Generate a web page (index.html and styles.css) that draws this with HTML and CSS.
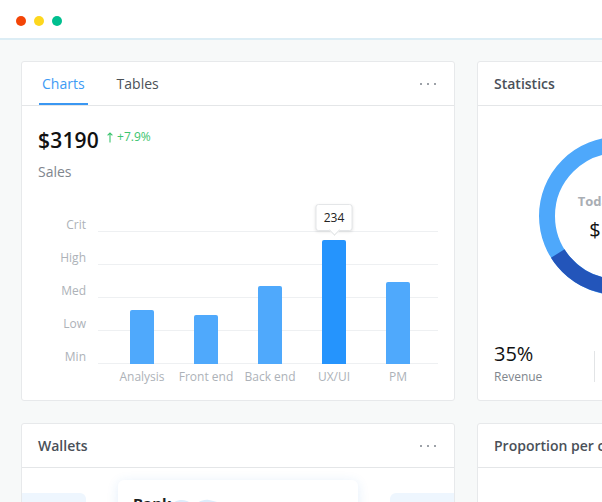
FILE: index.html
```html
<!DOCTYPE html>
<html lang="en">
<head>
<meta charset="utf-8">
<title>Dashboard</title>
<link rel="stylesheet" href="styles.css">
</head>
<body>
<div class="titlebar">
  <span class="dot dot-red"></span>
  <span class="dot dot-yellow"></span>
  <span class="dot dot-green"></span>
</div>
<main class="dashboard">
  <section class="card card-sales">
    <header class="card-head">
      <nav class="tabs">
        <span class="tab tab-active">Charts</span>
        <span class="tab">Tables</span>
      </nav>
      <span class="more"><i></i><i></i><i></i></span>
    </header>
    <div class="sales-body">
      <div class="total">
        <span class="amount">$3190</span>
        <span class="growth">
          <svg class="arrow" width="6" height="11" viewBox="0 0 6 11"><path d="M3 10.5V1M0.6 3.4L3 1l2.4 2.4" fill="none" stroke="#3cc46e" stroke-width="1.1"/></svg>
          +7.9%
        </span>
      </div>
      <div class="sub">Sales</div>
      <div class="chart">
        <div class="y-axis">
          <span>Crit</span><span>High</span><span>Med</span><span>Low</span><span>Min</span>
        </div>
        <div class="plot-wrap">
          <div class="plot">
            <div class="grid-lines"><i></i><i></i><i></i><i></i></div>
            <div class="bars">
              <div class="bar-col"><div class="bar" style="height:54px"></div></div>
              <div class="bar-col"><div class="bar" style="height:49px"></div></div>
              <div class="bar-col"><div class="bar" style="height:78px"></div></div>
              <div class="bar-col"><div class="bar bar-hl" style="height:124px"><span class="tip">234</span></div></div>
              <div class="bar-col"><div class="bar" style="height:82px"></div></div>
            </div>
          </div>
          <div class="x-axis">
            <span>Analysis</span><span>Front end</span><span>Back end</span><span>UX/UI</span><span>PM</span>
          </div>
        </div>
      </div>
    </div>
  </section>

  <section class="card card-stats">
    <header class="card-head">
      <h2 class="card-title">Statistics</h2>
    </header>
    <div class="stats-body">
      <div class="donut">
        <svg width="158" height="158" viewBox="0 0 158 158">
          <circle cx="79" cy="79" r="71" fill="none" stroke="#4ea8fb" stroke-width="16"/>
          <circle cx="79" cy="79" r="71" fill="none" stroke="#2355ba" stroke-width="16" stroke-dasharray="121.4 446.1" transform="rotate(50 79 79)"/>
        </svg>
        <div class="donut-text">
          <span class="donut-label">Today's Sales</span>
          <span class="donut-value">$1,250</span>
        </div>
      </div>
      <div class="stat-row">
        <div class="stat">
          <span class="stat-value">35%</span>
          <span class="stat-label">Revenue</span>
        </div>
        <span class="stat-sep"></span>
        <div class="stat stat-next">
          <span class="stat-value">45%</span>
          <span class="stat-label">Profit</span>
        </div>
      </div>
    </div>
  </section>

  <section class="card card-wallets">
    <header class="card-head">
      <h2 class="card-title">Wallets</h2>
      <span class="more"><i></i><i></i><i></i></span>
    </header>
    <div class="carousel">
      <div class="wallet wallet-side"></div>
      <div class="wallet wallet-main">
        <svg class="map" width="56" height="30" viewBox="0 0 56 30">
          <path d="M2 8c4-4 10-5 15-3 3 1 4 4 8 3 4-2 8-5 14-4 5 1 9 3 13 2 2 0 3 2 1 4-3 2-7 1-9 4-2 2 0 5-3 6-3 1-5-2-8-1-3 1-2 5-6 6-3 0-4-3-7-3-3 0-5 3-8 1-2-2 1-5-2-7C7 14 0 11 2 8z" fill="#dcecfb"/>
        </svg>
        <span class="wallet-name">Bank</span>
      </div>
      <div class="wallet wallet-side"></div>
    </div>
  </section>

  <section class="card card-prop">
    <header class="card-head">
      <h2 class="card-title">Proportion per category</h2>
    </header>
  </section>
</main>
</body>
</html>
```

FILE: styles.css
```css
* { box-sizing: border-box; }
html, body { margin: 0; padding: 0; }
body {
  width: 602px;
  height: 502px;
  overflow: hidden;
  background: #f7f9f9;
  font-family: "Open Sans", "Liberation Sans", sans-serif;
  color: #222;
}
.titlebar {
  height: 40px;
  background: #fff;
  border-bottom: 2px solid #dcedf5;
  display: flex;
  align-items: center;
  gap: 8px;
  padding: 3px 0 0 16px;
}
.dot { width: 10px; height: 10px; border-radius: 50%; display: block; }
.dot-red { background: #f34507; }
.dot-yellow { background: #fdd71e; }
.dot-green { background: #00bf8f; }

.dashboard {
  display: grid;
  grid-template-columns: 434px 282px;
  grid-template-rows: 340px 300px;
  column-gap: 22px;
  row-gap: 22px;
  padding: 21px 0 0 21px;
  width: max-content;
}
.card {
  background: #fff;
  border: 1px solid #e7e9eb;
  border-radius: 3px;
  overflow: hidden;
}
.card-head {
  height: 44px;
  border-bottom: 1px solid #e4e6e8;
  display: flex;
  align-items: center;
  justify-content: space-between;
  padding: 0 18px 0 16px;
}
.card-title {
  margin: 0;
  font-size: 14px;
  font-weight: 600;
  color: #4a5058;
  line-height: 20px;
}
.tabs { display: flex; gap: 26px; height: 100%; margin-left: 1px; }
.tab {
  display: flex;
  align-items: center;
  padding: 0 3px;
  font-size: 14px;
  color: #4b5157;
  height: 100%;
}
.tab-active { color: #3d9bf5; box-shadow: inset 0 -2px 0 #3a97f2; }
.more { display: flex; gap: 5px; }
.more i { display: block; width: 2px; height: 2px; background: #9da2a8; }

.sales-body { padding: 20px 16px 0 16px; }
.total { display: flex; }
.amount { font-size: 21px; font-weight: 600; line-height: 28px; color: #111; letter-spacing: 0.2px; }
.growth {
  align-self: flex-start;
  margin: 3px 0 0 8px;
  display: flex;
  align-items: center;
  gap: 4px;
  font-size: 12px;
  line-height: 16px;
  color: #3cc46e;
}
.arrow { display: block; margin-top: 1px; }
.sub { margin-top: 8px; font-size: 14px; line-height: 19px; color: #80868d; }

.chart { margin-top: 36px; display: flex; gap: 12px; }
.y-axis { width: 48px; display: flex; flex-direction: column; align-items: flex-end; }
.y-axis span { height: 33px; font-size: 12px; line-height: 16px; color: #adb2b8; }
.y-axis span:last-child { height: 16px; }
.plot-wrap { flex: 1; padding-top: 14px; }
.plot { display: grid; }
.grid-lines, .bars { grid-area: 1 / 1; }
.grid-lines { display: flex; flex-direction: column; border-bottom: 1px solid #eef0f2; }
.grid-lines i { display: block; height: 33px; border-top: 1px solid #eef0f2; }
.bars { display: flex; align-items: flex-end; padding: 0 8px 0 12px; }
.bar-col { width: 64px; display: flex; justify-content: center; }
.bar { width: 24px; background: #4fa9fc; border-radius: 2px 2px 0 0; }
.bar-hl { background: #2594fd; position: relative; }
.tip {
  position: absolute;
  bottom: calc(100% + 9px);
  left: 50%;
  transform: translateX(-50%);
  width: 37px;
  height: 27px;
  background: #fff;
  border: 1px solid #e4e6e8;
  border-radius: 3px;
  box-shadow: 0 1px 3px rgba(0, 0, 0, 0.1);
  font-size: 12px;
  line-height: 25px;
  text-align: center;
  color: #222;
}
.tip::after {
  content: "";
  position: absolute;
  left: 50%;
  bottom: -4px;
  width: 7px;
  height: 7px;
  margin-left: -3.5px;
  background: #fff;
  border-right: 1px solid #e4e6e8;
  border-bottom: 1px solid #e4e6e8;
  transform: rotate(45deg);
}
.x-axis { display: flex; padding: 0 8px 0 12px; margin-top: 5px; }
.x-axis span { width: 64px; text-align: center; font-size: 12px; line-height: 16px; color: #adb2b8; white-space: nowrap; }

.stats-body { padding: 31px 16px 0 16px; }
.donut { display: grid; justify-content: center; align-items: center; }
.donut svg, .donut-text { grid-area: 1 / 1; }
.donut svg { display: block; }
.donut-text { display: flex; flex-direction: column; align-items: center; gap: 6px; padding: 2px 0 0 5px; }
.donut-label { font-size: 13px; font-weight: 700; line-height: 18px; color: #a9aeb4; }
.donut-value { font-size: 20px; line-height: 27px; color: #111; }
.stat-row { margin-top: 45px; display: flex; }
.stat { width: 100px; display: flex; flex-direction: column; }
.stat-next { padding-left: 16px; }
.stat-value { font-size: 20px; line-height: 27px; color: #111; }
.stat-label { margin-top: 2px; font-size: 12px; line-height: 16px; color: #80868d; }
.stat-sep { align-self: flex-end; width: 1px; height: 31px; margin-bottom: 3px; background: #e2e4e6; }

.carousel {
  display: flex;
  justify-content: center;
  align-items: center;
  gap: 32px;
  padding-top: 12px;
  overflow: hidden;
}
.wallet { flex-shrink: 0; border-radius: 6px; }
.wallet-side { width: 200px; height: 124px; background: #eef6fe; }
.wallet-main {
  width: 240px;
  height: 150px;
  background: #fff;
  box-shadow: 0 2px 12px rgba(40, 120, 220, 0.13);
  padding: 12px 15px;
  position: relative;
}
.map { position: absolute; left: 52px; top: 16px; }
.wallet-name { position: relative; font-size: 15px; font-weight: 700; line-height: 20px; color: #1d1f22; }
```
